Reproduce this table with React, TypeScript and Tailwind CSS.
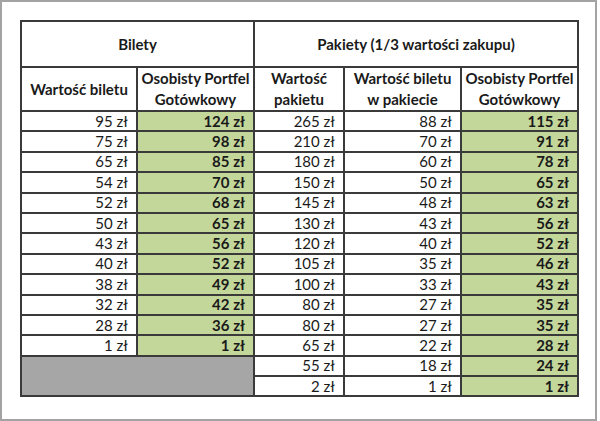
import React from 'react';

const bilety: [number, number][] = [
  [95, 124], [75, 98], [65, 85], [54, 70], [52, 68], [50, 65],
  [43, 56], [40, 52], [38, 49], [32, 42], [28, 36], [1, 1],
];

const pakiety: [number, number, number][] = [
  [265, 88, 115], [210, 70, 91], [180, 60, 78], [150, 50, 65], [145, 48, 63],
  [130, 43, 56], [120, 40, 52], [105, 35, 46], [100, 33, 43], [80, 27, 35],
  [80, 27, 35], [65, 22, 28], [55, 18, 24], [2, 1, 1],
];

const cell = 'border-2 border-[#3a3a3a] px-2 py-0 text-right leading-none';
const green = 'bg-[#c4d79b] font-bold';

export default function App() {
  return (
    <div className="w-[597px] h-[421px] border-2 border-[#a3a3a3] bg-white pl-[18px] pt-[18px] font-['Lato',sans-serif] text-[15px] text-[#1a1a1a]">
      <table className="border-collapse table-fixed w-[557px]">
        <colgroup>
          <col className="w-[116px]" />
          <col className="w-[117px]" />
          <col className="w-[90px]" />
          <col className="w-[117px]" />
          <col className="w-[117px]" />
        </colgroup>
        <thead>
          <tr className="h-[46px]">
            <th colSpan={2} className="border-2 border-[#3a3a3a] font-bold">Bilety</th>
            <th colSpan={3} className="border-2 border-[#3a3a3a] font-bold">Pakiety (1/3 wartości zakupu)</th>
          </tr>
          <tr className="h-[42px] leading-[21px]">
            <th className="border-2 border-[#3a3a3a] font-bold">Wartość biletu</th>
            <th className="border-2 border-[#3a3a3a] font-bold">Osobisty Portfel<br />Gotówkowy</th>
            <th className="border-2 border-[#3a3a3a] font-bold">Wartość<br />pakietu</th>
            <th className="border-2 border-[#3a3a3a] font-bold">Wartość biletu<br />w pakiecie</th>
            <th className="border-2 border-[#3a3a3a] font-bold">Osobisty Portfel<br />Gotówkowy</th>
          </tr>
        </thead>
        <tbody>
          {pakiety.map((p, i) => (
            <tr key={i} className="h-[20.4px]">
              {i < bilety.length ? (
                <>
                  <td className={cell}>{bilety[i][0]} zł</td>
                  <td className={`${cell} ${green}`}>{bilety[i][1]} zł</td>
                </>
              ) : i === bilety.length ? (
                <td colSpan={2} rowSpan={2} className="border-2 border-[#3a3a3a] bg-[#a6a6a6]" />
              ) : null}
              <td className={cell}>{p[0]} zł</td>
              <td className={cell}>{p[1]} zł</td>
              <td className={`${cell} ${green}`}>{p[2]} zł</td>
            </tr>
          ))}
        </tbody>
      </table>
    </div>
  );
}
